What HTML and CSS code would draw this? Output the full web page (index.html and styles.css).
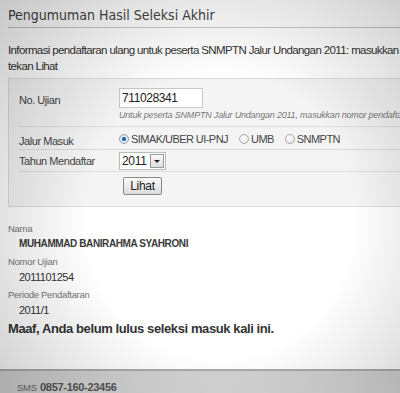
FILE: index.html
```html
<!DOCTYPE html>
<html>

<head>
    <title>Pengumuman Hasil Seleksi Akhir</title>
    <link rel="stylesheet" href="styles.css">
</head>

<body>
    <div class="page">
        <h1 class="title">Pengumuman Hasil Seleksi Akhir</h1>

        <p class="intro">Informasi pendaftaran ulang untuk peserta SNMPTN Jalur Undangan 2011: masukkan nomor ujian lalu<br>tekan Lihat</p>

        <!-- Form pencarian -->
        <div class="form-box">
            <div class="row row-ujian">
                <div class="label">No. Ujian</div>
                <div class="field">
                    <input class="text-input" type="text" value="711028341">
                    <div class="hint">Untuk peserta SNMPTN Jalur Undangan 2011, masukkan nomor pendaftaran SNMPTN</div>
                </div>
            </div>

            <div class="row row-jalur">
                <div class="label">Jalur Masuk</div>
                <div class="field radios">
                    <span class="radio checked"></span><span class="radio-text">SIMAK/UBER UI-PNJ</span>
                    <span class="radio"></span><span class="radio-text">UMB</span>
                    <span class="radio"></span><span class="radio-text">SNMPTN</span>
                </div>
            </div>

            <div class="row row-tahun">
                <div class="label">Tahun Mendaftar</div>
                <div class="field">
                    <span class="select"><span class="select-value">2011</span><span class="select-btn"></span></span>
                </div>
            </div>

            <div class="row row-submit">
                <div class="label"></div>
                <div class="field">
                    <button class="button">Lihat</button>
                </div>
            </div>
        </div>

        <!-- Hasil -->
        <div class="result">
            <div class="res-label">Nama</div>
            <div class="res-value res-name">MUHAMMAD BANIRAHMA SYAHRONI</div>

            <div class="res-label">Nomor Ujian</div>
            <div class="res-value">2011101254</div>

            <div class="res-label">Periode Pendaftaran</div>
            <div class="res-value">2011/1</div>

            <p class="message">Maaf, Anda belum lulus seleksi masuk kali ini.</p>
        </div>
    </div>

    <div class="footer">
        <span class="sms">SMS</span> <span class="phone">0857-160-23456</span>
    </div>
</body>

</html>
```

FILE: styles.css
```css
html, body {
    margin: 0;
    padding: 0;
    height: 100%;
    overflow: hidden;
}

body {
    background: #fff;
    font-family: "Liberation Sans", Arial, sans-serif;
    font-size: 12px;
    color: #333;
}

/* vignette over the whole shot */
body::after {
    content: "";
    position: fixed;
    left: 0;
    top: 0;
    width: 100%;
    height: 100%;
    pointer-events: none;
    background: radial-gradient(ellipse 75% 80% at 55% 55%, rgba(0, 0, 0, 0) 45%, rgba(0, 0, 0, 0.22) 100%);
}

.page {
    width: 600px;
    padding-left: 8px;
}

.title {
    margin: 6px 0 0 0;
    padding-bottom: 3px;
    border-bottom: 1px solid #c8c8c8;
    font-family: "DejaVu Sans", sans-serif;
    font-stretch: condensed;
    font-size: 14px;
    font-weight: normal;
    line-height: 18px;
    color: #444;
}

.intro {
    margin: 14px 0 4px 0;
    font-size: 11.5px;
    letter-spacing: -0.62px;
    line-height: 16px;
    color: #333;
}

/* Form */
.form-box {
    border: 1px solid #dcdcdc;
    background: #f4f4f4;
    padding: 9px 0 11px 10px;
}

.row {
    display: flex;
    border-bottom: 1px solid #dcdcdc;
}

.row-submit {
    border-bottom: none;
}

.label {
    width: 100px;
    flex-shrink: 0;
    font-size: 11px;
    letter-spacing: -0.45px;
    color: #444;
}

.row-ujian .label {
    padding-top: 6px;
}

.row-jalur {
    height: 22px;
    align-items: flex-end;
}

.row-jalur .label {
    padding-bottom: 2px;
}

.row-tahun {
    height: 21px;
    align-items: center;
}

.row-submit {
    padding-top: 5px;
}

.text-input {
    display: block;
    width: 78px;
    height: 18px;
    margin: 0;
    padding: 0 2px;
    border: 1px solid #c9c9c9;
    background: #fff;
    font-family: "Liberation Sans", Arial, sans-serif;
    font-size: 12px;
    letter-spacing: -0.4px;
    color: #222;
}

.hint {
    margin: 1px 0 4px 0;
    font-size: 9px;
    font-style: italic;
    letter-spacing: -0.2px;
    color: #777;
    white-space: nowrap;
    line-height: 13px;
}

.radios {
    display: flex;
    align-items: center;
    padding-bottom: 4px;
}

.radio {
    width: 8px;
    height: 8px;
    border-radius: 50%;
    border: 1px solid #aaa;
    background: radial-gradient(circle at 40% 35%, #fff 0%, #ddd 100%);
    margin-right: 2px;
}

.radio.checked {
    border-color: #8aa0b8;
    background: radial-gradient(circle, #1f5fa8 0, #2d6bb3 30%, #e8eef5 45%, #cfd7e0 100%);
}

.radio-text {
    margin-right: 11px;
    font-size: 11px;
    letter-spacing: -0.55px;
    color: #444;
}

.select {
    display: inline-flex;
    align-items: center;
    height: 16px;
    border: 1px solid #bbb;
    background: #fff;
}

.select-value {
    padding: 0 3px 0 2px;
    font-size: 12px;
    letter-spacing: -0.3px;
    color: #222;
}

.select-btn {
    width: 12px;
    height: 12px;
    margin-right: 1px;
    border: 1px solid #999;
    background: linear-gradient(#fafafa, #ddd);
    position: relative;
}

.select-btn::after {
    content: "";
    position: absolute;
    left: 3px;
    top: 5px;
    border-left: 3px solid transparent;
    border-right: 3px solid transparent;
    border-top: 3px solid #222;
}

.button {
    height: 18px;
    width: 39px;
    margin-left: 4px;
    padding: 0;
    border: 1px solid #888;
    border-radius: 2px;
    background: linear-gradient(#fbfbfb, #dcdcdc);
    font-family: "Liberation Sans", Arial, sans-serif;
    font-size: 12px;
    letter-spacing: -0.3px;
    color: #222;
}

/* Result */
.result {
    padding-top: 15px;
}

.res-label {
    font-size: 9.5px;
    letter-spacing: -0.3px;
    color: #777;
    line-height: 14px;
}

.res-value {
    padding-left: 11px;
    margin-bottom: 3px;
    font-size: 11px;
    letter-spacing: -0.5px;
    line-height: 16px;
    color: #333;
}

.res-name {
    font-size: 10px;
    letter-spacing: -0.4px;
    font-weight: bold;
    color: #3a3a3a;
}

.message {
    margin: 0;
    font-size: 13px;
    letter-spacing: -0.4px;
    line-height: 16px;
    font-weight: bold;
    color: #333;
}

/* Footer */
.footer {
    margin-top: 32px;
    border-top: 2px solid #aaa;
    background: linear-gradient(#d2d2d2, #dcdcdc);
    padding: 8px 0 0 17px;
    height: 30px;
    line-height: 16px;
}

.sms {
    font-size: 9.5px;
    letter-spacing: -0.3px;
    color: #666;
}

.phone {
    font-size: 11px;
    letter-spacing: -0.3px;
    font-weight: bold;
    color: #555;
}
```
